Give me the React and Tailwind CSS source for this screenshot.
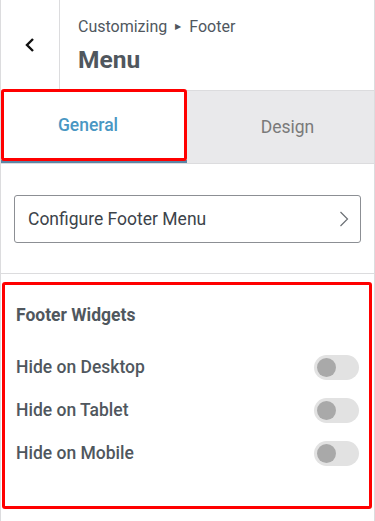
import React from "react";

function Toggle() {
  return (
    <div className="w-[45px] h-[25px] rounded-full bg-[#e2e2e2] flex items-center px-[3px]">
      <div className="w-[19px] h-[19px] rounded-full bg-[#a9a9a9]" />
    </div>
  );
}

function Row({ label }) {
  return (
    <div className="flex items-center justify-between h-[43px] pr-[10px]">
      <span className="text-[17.5px] font-medium text-[#50575e]">{label}</span>
      <Toggle />
    </div>
  );
}

export default function App() {
  return (
    <div
      className="w-[375px] h-[521px] bg-white border-l border-r border-[#dcdcde] overflow-hidden"
      style={{ fontFamily: "Roboto, 'Liberation Sans', sans-serif" }}
    >
      {/* header */}
      <div className="flex h-[91px] border-b border-[#dcdcde]">
        <div className="w-[59px] border-r border-[#dcdcde] flex items-center justify-center">
          <svg width="14" height="16" viewBox="0 0 14 16" fill="none">
            <path d="M10 2 L4 8 L10 14" stroke="#111" strokeWidth="2.4" />
          </svg>
        </div>
        <div className="pl-[18px] pt-[16px]">
          <div className="flex items-center text-[16px] text-[#50575e] leading-[22px]">
            Customizing
            <span className="text-[8px] mx-[8px]">▶</span>
            Footer
          </div>
          <div className="text-[24.5px] font-bold text-[#50575e] leading-[30px] mt-[7px]">Menu</div>
        </div>
      </div>

      {/* tabs */}
      <div className="flex h-[73px] bg-[#e9e9eb] border-b border-[#dcdcde]">
        <div className="relative w-[186px] bg-white border-b-[3px] border-[#5b86a6] flex items-center justify-center pr-[12px]">
          <span className="text-[17.5px] font-medium text-[#4a97c3]">General</span>
          <div className="absolute left-0 right-0 top-[-2px] bottom-[-1px] border-[3px] border-[#ff0000] rounded-[3px]" />
        </div>
        <div className="flex-1 flex items-center justify-center pl-[14px] text-[17.5px] text-[#7a7a7a]">
          Design
        </div>
      </div>

      {/* menu button */}
      <div className="h-[110px] border-b border-[#dcdcde] pt-[31px] px-[13px]">
        <div className="h-[48px] border border-[#8c8f94] rounded-[3px] flex items-center justify-between pl-[13px] pr-[11px]">
          <span className="text-[17.5px] text-[#3c434a]">Configure Footer Menu</span>
          <svg width="10" height="16" viewBox="0 0 10 16" fill="none">
            <path d="M1.5 1 L8.5 8 L1.5 15" stroke="#6b6f74" strokeWidth="1.2" />
          </svg>
        </div>
      </div>

      {/* footer widgets */}
      <div className="mt-[8px] ml-[1px] w-[370px] h-[227px] border-[3px] border-[#ff0000] rounded-[3px] pl-[11px] pt-[17px]">
        <div className="text-[17.5px] font-bold text-[#50575e] leading-[26px]">Footer Widgets</div>
        <div className="mt-[18px]">
          <Row label="Hide on Desktop" />
          <Row label="Hide on Tablet" />
          <Row label="Hide on Mobile" />
        </div>
      </div>
    </div>
  );
}
